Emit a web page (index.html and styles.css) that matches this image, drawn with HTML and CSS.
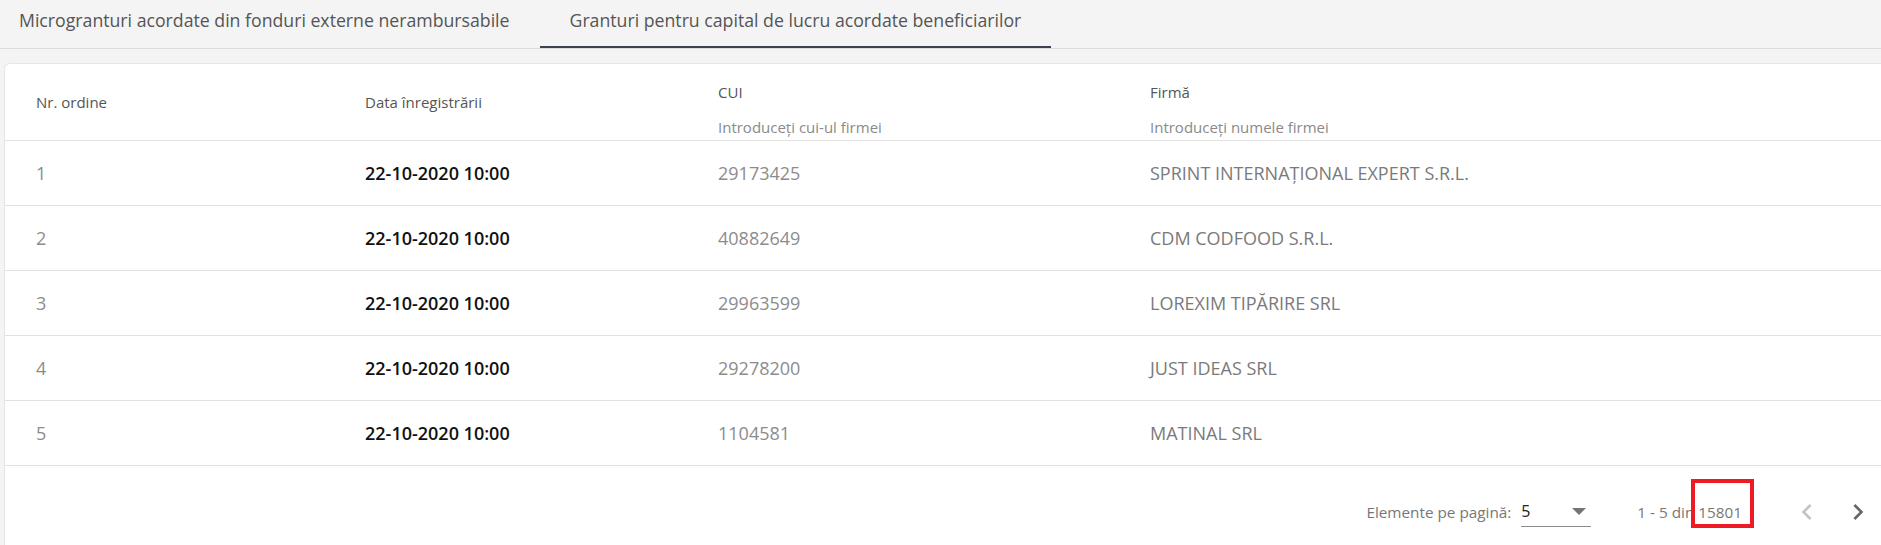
FILE: index.html
```html
<!DOCTYPE html>
<html lang="ro">
  <head>
    <meta charset="UTF-8" />
    <meta name="viewport" content="width=device-width, initial-scale=1.0" />
    <title>Granturi pentru capital de lucru</title>
    <link rel="stylesheet" href="styles.css">
  </head>
  <body>
    <!-- Tabs -->
    <nav class="tabs">
      <a class="tab">Microgranturi acordate din fonduri externe nerambursabile</a>
      <a class="tab active">Granturi pentru capital de lucru acordate beneficiarilor</a>
    </nav>

    <main class="content">
      <div class="card">
        <!-- Table -->
        <div class="table">
          <div class="row head">
            <div class="cell">Nr. ordine</div>
            <div class="cell">Data înregistrării</div>
            <div class="cell filter">
              <span>CUI</span>
              <span class="hint">Introduceți cui-ul firmei</span>
            </div>
            <div class="cell filter">
              <span>Firmă</span>
              <span class="hint">Introduceți numele firmei</span>
            </div>
          </div>
          <div class="row">
            <div class="cell num">1</div>
            <div class="cell date">22-10-2020 10:00</div>
            <div class="cell cui">29173425</div>
            <div class="cell firm">SPRINT INTERNAŢIONAL EXPERT S.R.L.</div>
          </div>
          <div class="row">
            <div class="cell num">2</div>
            <div class="cell date">22-10-2020 10:00</div>
            <div class="cell cui">40882649</div>
            <div class="cell firm">CDM CODFOOD S.R.L.</div>
          </div>
          <div class="row">
            <div class="cell num">3</div>
            <div class="cell date">22-10-2020 10:00</div>
            <div class="cell cui">29963599</div>
            <div class="cell firm">LOREXIM TIPĂRIRE SRL</div>
          </div>
          <div class="row">
            <div class="cell num">4</div>
            <div class="cell date">22-10-2020 10:00</div>
            <div class="cell cui">29278200</div>
            <div class="cell firm">JUST IDEAS SRL</div>
          </div>
          <div class="row">
            <div class="cell num">5</div>
            <div class="cell date">22-10-2020 10:00</div>
            <div class="cell cui">1104581</div>
            <div class="cell firm">MATINAL SRL</div>
          </div>
        </div>

        <!-- Paginator -->
        <div class="paginator">
          <span class="page-label">Elemente pe pagină:</span>
          <div class="page-select">
            <span>5</span>
            <svg class="caret" width="14" height="7" viewBox="0 0 14 7"><path d="M0 0h14L7 7z" fill="#757575"/></svg>
          </div>
          <span class="range">1 - 5 din <span class="total">15801<span class="mark"></span></span></span>
          <button class="nav-btn" disabled>
            <svg width="32" height="32" viewBox="0 0 24 24"><path d="M15.41 7.41L14 6l-6 6 6 6 1.41-1.41L10.83 12z" fill="currentColor"/></svg>
          </button>
          <button class="nav-btn">
            <svg width="32" height="32" viewBox="0 0 24 24"><path d="M10 6L8.59 7.41 13.17 12l-4.58 4.59L10 18l6-6z" fill="currentColor"/></svg>
          </button>
        </div>
      </div>
    </main>
  </body>
</html>
```

FILE: styles.css
```css
/* Global Styles */
body {
  margin: 0;
  background-color: #f4f4f4;
  font-family: "Open Sans", sans-serif;
  color: #555;
  overflow: hidden;
}

/* Tabs */
.tabs {
  display: flex;
  height: 48px;
  border-bottom: 1px solid #dcdcdc;
}

.tab {
  display: flex;
  align-items: center;
  padding: 0 30px 6px;
  font-size: 17.7px;
  color: #555;
  box-sizing: border-box;
  border-bottom: 2px solid transparent;
}

.tab:first-child {
  padding-left: 19px;
}

.tab.active {
  border-bottom-color: #3d4252;
}

/* Card */
.content {
  padding: 15px 0 0 5px;
}

.card {
  width: 1900px;
  background-color: white;
  border-radius: 5px;
  box-shadow: 0 0 0 1px #e6e6e6;
}

/* Table */
.row {
  display: grid;
  grid-template-columns: 329px 353px 432px 1fr;
  height: 65px;
  padding-left: 31px;
  border-bottom: 1px solid #e2e2e2;
  box-sizing: border-box;
}

.row.head {
  height: 77px;
}

.cell {
  display: flex;
  align-items: center;
  font-size: 18px;
}

.head .cell {
  font-size: 15px;
  color: #555;
}

.head .filter {
  flex-direction: column;
  align-items: flex-start;
  justify-content: flex-start;
  padding-top: 18px;
  gap: 15px;
}

.hint {
  color: #8a8a8a;
}

.num,
.cui {
  color: #8c8c8c;
}

.date {
  color: #111;
  font-weight: 600;
}

.firm {
  color: #7a7a7a;
}

/* Paginator */
.paginator {
  display: flex;
  align-items: center;
  height: 79px;
  padding: 6px 27px 0 0;
  justify-content: flex-end;
  font-size: 15.3px;
  color: #777;
}

.page-select {
  display: flex;
  align-items: center;
  justify-content: space-between;
  width: 70px;
  height: 30px;
  margin-left: 10px;
  padding-right: 5px;
  box-sizing: border-box;
  border-bottom: 1px solid #8c8c8c;
  color: #222;
  font-size: 16px;
}

.range {
  margin-left: 46px;
  margin-right: 45px;
}

.total {
  position: relative;
}

.mark {
  position: absolute;
  left: -7px;
  right: -12px;
  top: -23px;
  height: 41px;
  border: 4px solid #ed1c24;
}

.nav-btn {
  width: 40px;
  height: 40px;
  padding: 0;
  margin-left: 11px;
  border: none;
  background: none;
  color: #666;
  display: flex;
  align-items: center;
  justify-content: center;
}

.nav-btn:first-of-type {
  margin-left: 0;
}

.nav-btn:disabled {
  color: #c4c4c4;
}
```
